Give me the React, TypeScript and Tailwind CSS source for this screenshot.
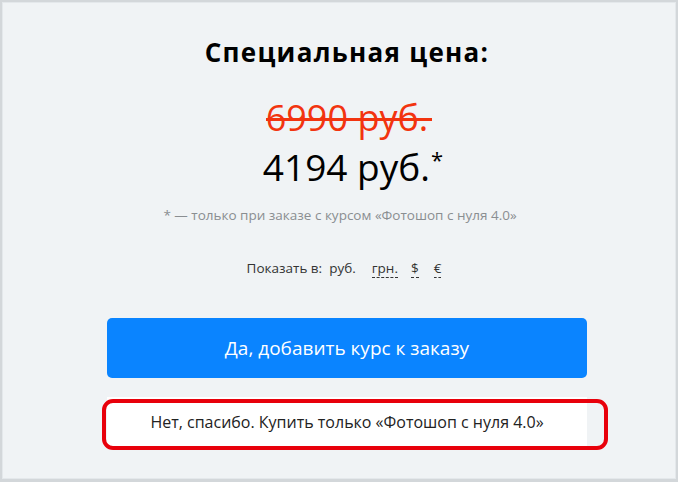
import React from "react"

export default function App() {
  return (
    <div className="w-[678px] h-[482px] bg-[#d3d7da] p-[2px] pb-[3px]" style={{ fontFamily: '"Open Sans", "Noto Sans", sans-serif' }}>
      <div className="h-full bg-[#f0f3f5] border border-[#e4e8eb] flex flex-col items-center pl-[16px]">
        <h1 className="mt-[31px] text-[26px] leading-[36px] font-bold text-black tracking-[1.3px]">Специальная цена:</h1>

        <div className="mt-[28px] text-[36px] leading-[40px] text-[#f2340f] relative">
          6990 руб.
          <span className="absolute left-0 right-[-4px] top-[20px] h-[3px] bg-[#f2340f]" />
        </div>
        <div className="mt-[7px] text-[37px] leading-[44px] text-black pl-[12px] flex items-start">
          <span>4194 руб.</span>
          <span className="text-[22px] leading-none mt-[3px] ml-[1px]">*</span>
        </div>

        <p className="mt-[17px] mr-[14px] text-[13.5px] leading-[18px] text-[#8a8e91]">* — только при заказе с курсом «Фотошоп с нуля 4.0»</p>

        <div className="mt-[35px] mr-[6px] flex items-baseline text-[13.5px] leading-[18px] text-[#333]">
          <span>Показать в:</span>
          <span className="ml-[7px]">руб.</span>
          <span className="ml-[16px] border-b border-dashed border-[#333]">грн.</span>
          <span className="ml-[13px] border-b border-dashed border-[#333]">$</span>
          <span className="ml-[15px] border-b border-dashed border-[#333]">€</span>
        </div>

        <button className="mt-[40px] w-[480px] h-[60px] rounded-[5px] bg-[#0a84ff] text-white text-[19px] leading-none">
          Да, добавить курс к заказу
        </button>

        <div className="mt-[19px] relative w-[480px]">
          <button className="w-full h-[50px] bg-white text-[16px] text-[#222]">
            Нет, спасибо. Купить только «Фотошоп с нуля 4.0»
          </button>
          <span className="absolute left-[-5px] right-[-21px] top-[2px] bottom-[-3px] border-[4px] border-[#e8000b] rounded-[11px] pointer-events-none" />
        </div>
      </div>
    </div>
  )
}
